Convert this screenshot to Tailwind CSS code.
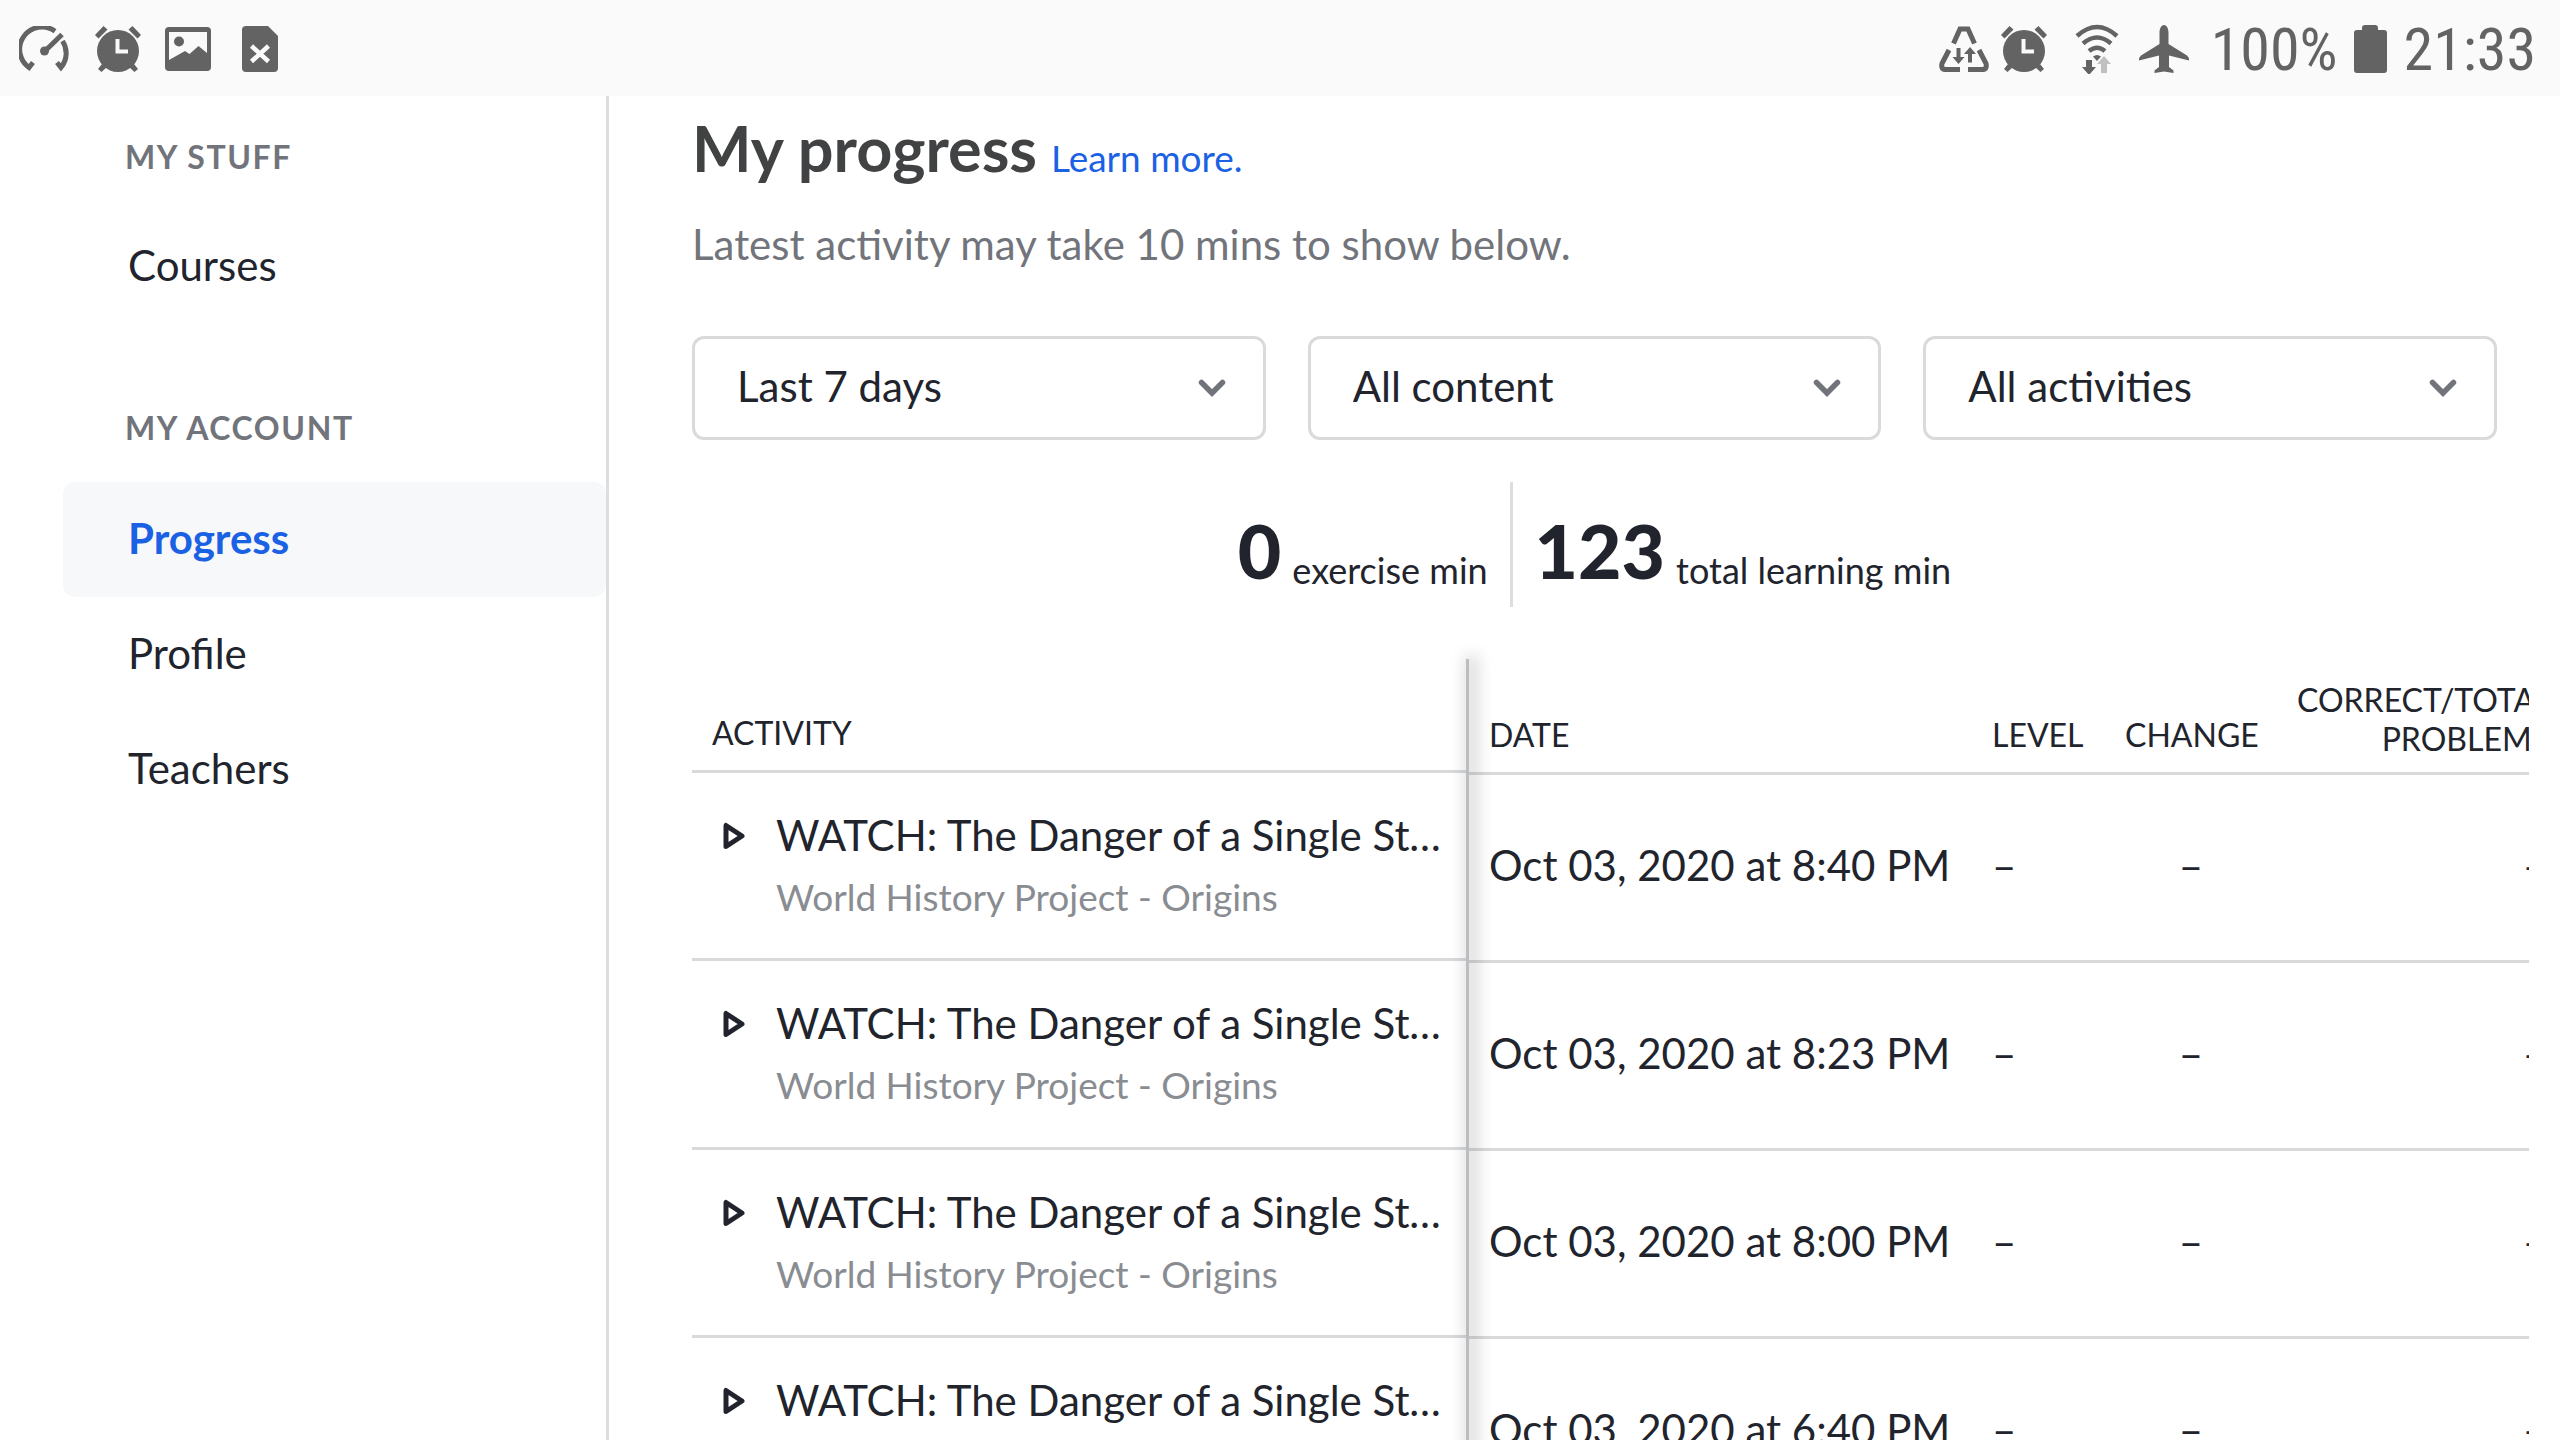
<!DOCTYPE html>
<html lang="en">
<head>
<meta charset="utf-8">
<meta name="viewport" content="width=device-width, initial-scale=1">
<title>My progress</title>
<script src="https://cdn.jsdelivr.net/npm/@tailwindcss/browser@4"></script>
</head>
<body class="flex h-screen flex-col overflow-hidden bg-white font-['Lato',sans-serif] text-[42px] leading-[52px] text-[#21242c]">

<svg class="hidden" aria-hidden="true">
  <symbol id="alarm" viewBox="0 0 46 46">
    <circle cx="23" cy="25" r="21"/>
    <path d="M0 9 8.500 0 12.500 3.500 3.500 12.500zM46 9 37.500 0 33.500 3.500 42.500 12.500zM7 38 3 43 6.500 46 12 41zM39 38 43 43 39.500 46 34 41z"/>
    <path d="M22.500 13v12.500H33" fill="none" stroke="#fafafa" stroke-width="4"/>
  </symbol>
  <symbol id="play" viewBox="0 0 22 28">
    <path d="M3 3.500v21L19 14z" fill="none" stroke="currentColor" stroke-width="5" stroke-linejoin="round"/>
  </symbol>
  <symbol id="chevron" viewBox="0 0 28 18">
    <path d="M3.500 3.500 14 14 24.500 3.500" fill="none" stroke="currentColor" stroke-width="5.500" stroke-linecap="round"/>
  </symbol>
</svg>

<header class="flex h-24 shrink-0 items-center justify-between bg-[#fafafa] pt-0.5 pr-6 pl-[19px] text-[#636363]">
  <div class="flex items-center gap-6">
    <svg class="h-[46px] w-[52px]" viewBox="0 0 52 46" fill="none" stroke="currentColor" stroke-width="5" role="img" aria-label="Speed">
      <path d="M36 5.200A22.300 22.300 0 1 0 10 41.500l4-5M43.500 15A22.300 22.300 0 0 1 42 41.500l-4-5"/>
      <path d="M26 25 43 8.500"/><circle cx="25.500" cy="25" r="4.500" fill="currentColor" stroke="none"/>
    </svg>
    <svg class="size-[46px]" fill="currentColor" role="img" aria-label="Alarm"><use href="#alarm"/></svg>
    <svg class="h-[46px] w-[48px]" viewBox="0 0 48 46" role="img" aria-label="Image">
      <rect x="0" y="1" width="46" height="44" rx="4" fill="currentColor"/>
      <path d="M4 6h38v21l-8.500-7-9 8-4.500-3L4 34z" fill="#fafafa"/>
      <circle cx="14" cy="15.500" r="5" fill="currentColor"/>
    </svg>
    <svg class="ml-1 h-[46px] w-[42px]" viewBox="0 0 42 46" role="img" aria-label="File error">
      <path d="M5 0h22l10 10v32a4 4 0 0 1-4 4H5a4 4 0 0 1-4-4V4a4 4 0 0 1 4-4z" fill="currentColor"/>
      <path d="M10.500 20 27.500 35.500M27.500 20 10.500 35.500" stroke="#fafafa" stroke-width="4.500"/>
    </svg>
  </div>
  <div class="flex items-center text-[60px] leading-[70px] font-['Roboto_Condensed','Liberation_Sans_Narrow',sans-serif]">
    <svg class="mr-3 h-[46px] w-[50px]" viewBox="0 0 50 46" fill="none" stroke="currentColor" stroke-width="5" role="img" aria-label="Data saver">
      <path d="M14.500 17.500 21 3h8l6.500 14.500M10 24 3 37.500Q1.500 43.500 7 43.500H21M40 24l7 13.500Q48.500 43.500 43 43.500H29"/>
      <path d="M19.500 22V34M31 36.500V25" stroke-width="4"/>
      <path d="M13.500 31h12l-6 7zM25 28h12l-6-7z" fill="currentColor" stroke="none"/>
    </svg>
    <svg class="mr-7 size-[46px]" fill="currentColor" role="img" aria-label="Alarm"><use href="#alarm"/></svg>
    <svg class="mr-5 h-[50px] w-[44px]" viewBox="0 0 44 50" role="img" aria-label="Wi-Fi">
      <g fill="none" stroke="currentColor" stroke-width="4.500"><path d="M2 12Q22-6 42 12M8 19.500Q22 7.500 36 19.500M14 27Q22 20.500 30 27"/></g>
      <path d="M18 32.500q4-3 8 0L22 37z" fill="currentColor"/>
      <path d="M11 36v7H7l7 8 7-8h-4v-7z" fill="currentColor"/><path d="M26 49v-9h-4l7-8 7 8h-4v9z" fill="#c0c0c0"/>
    </svg>
    <svg class="mr-[22px] h-[48px] w-[50px]" viewBox="0 0 50 48" fill="currentColor" role="img" aria-label="Airplane mode">
      <path d="M25 0c3 0 4.500 4 4.500 8v11L48 30.500q2 1.500 2 5L30 30.500V42l4.500 3.500V48L25 46.500 15.500 48v-2.500L20 42V30.500L0 35.500q0-3.500 2-5L20.500 19V8C20.500 4 22 0 25 0z"/>
    </svg>
    <span class="pt-0.5">100%</span>
    <svg class="mx-4 h-[48px] w-[34px]" viewBox="0 0 34 48" fill="currentColor" role="img" aria-label="Battery full">
      <path d="M11 0h10q3 0 3 3v2h6q3 0 3 3v37q0 3-3 3H3q-3 0-3-3V8q0-3 3-3h5V3q0-3 3-3z"/>
    </svg>
    <time class="pt-0.5">21:33</time>
  </div>
</header>

<div class="flex min-h-0 flex-1">
  <nav class="w-[609px] shrink-0 border-r-3 border-[#dcdddf] pl-[63px] pt-[41px]" aria-label="Account">
    <h2 class="pl-[62px] text-[32px] leading-10 font-bold tracking-wider text-[#71747a]">MY STUFF</h2>
    <ul class="mt-8">
      <li><a href="#" class="flex h-[115px] items-center rounded-xl pb-[3px] pl-[65px]">Courses</a></li>
    </ul>
    <h2 class="mt-[84px] pl-[62px] text-[32px] leading-10 font-bold tracking-wider text-[#71747a]">MY ACCOUNT</h2>
    <ul class="mt-[34px]">
      <li><a href="#" aria-current="page" class="flex h-[115px] items-center rounded-xl bg-[#f7f8fa] pb-[3px] pl-[65px] font-bold text-[#1b61e4]">Progress</a></li>
      <li><a href="#" class="flex h-[115px] items-center rounded-xl pb-[3px] pl-[65px]">Profile</a></li>
      <li><a href="#" class="flex h-[115px] items-center rounded-xl pb-[3px] pl-[65px]">Teachers</a></li>
    </ul>
  </nav>

  <main class="min-w-0 flex-1 overflow-hidden pt-[14px] pr-[31px] pl-[83px]">
    <div class="flex items-baseline gap-[14px]">
      <h1 class="text-[63px] leading-[76px] font-bold text-[#414243]">My progress</h1>
      <a href="#" class="text-[37px] text-[#1b61e4]">Learn more.</a>
    </div>
    <p class="mt-8 text-[#71747a]">Latest activity may take 10 mins to show below.</p>

    <form class="mt-[66px] mr-8 grid grid-cols-3 gap-[42px]">
      <div class="relative">
        <select aria-label="Time range" class="h-[104px] w-full appearance-none rounded-xl border-3 border-[#d9dadc] bg-white pb-[5px] pl-[42px]"><option>Last 7 days</option></select>
        <svg class="pointer-events-none absolute top-[43px] right-10 h-[18px] w-7 text-[#71747a]" aria-hidden="true"><use href="#chevron"/></svg>
      </div>
      <div class="relative">
        <select aria-label="Content" class="h-[104px] w-full appearance-none rounded-xl border-3 border-[#d9dadc] bg-white pb-[5px] pl-[42px]"><option>All content</option></select>
        <svg class="pointer-events-none absolute top-[43px] right-10 h-[18px] w-7 text-[#71747a]" aria-hidden="true"><use href="#chevron"/></svg>
      </div>
      <div class="relative">
        <select aria-label="Activity type" class="h-[104px] w-full appearance-none rounded-xl border-3 border-[#d9dadc] bg-white pb-[5px] pl-[42px]"><option>All activities</option></select>
        <svg class="pointer-events-none absolute top-[43px] right-10 h-[18px] w-7 text-[#71747a]" aria-hidden="true"><use href="#chevron"/></svg>
      </div>
    </form>

    <div class="mt-[42px] mr-8 flex h-[125px] justify-center text-[36px] leading-[44px]">
      <p class="flex items-end gap-[11px] border-r-3 border-[#dcdddf] pr-[22px] pb-[15px]"><strong class="text-[75px] leading-[84px] font-black">0</strong> exercise min</p>
      <p class="flex items-end gap-[11px] pb-[15px] pl-[22px]"><strong class="text-[75px] leading-[84px] font-black">123</strong> total learning min</p>
    </div>

    <div class="mt-[52px] flex">
      <table class="w-[774px] shrink-0 table-fixed border-collapse text-left">
        <thead>
          <tr class="h-[112px] border-b-3 border-[#d8d9db] text-[32px] leading-[39px]"><th scope="col" class="px-5 pb-[18px] align-bottom font-normal">ACTIVITY</th></tr>
        </thead>
        <tbody id="activities"></tbody>
      </table>
      <div class="relative z-10 w-[3px] shrink-0 bg-[#bcbdc0] shadow-[4px_0_16px_4px_rgba(0,0,0,0.18)]"></div>
      <div class="min-w-0 flex-1 overflow-hidden pt-0.5">
        <table class="w-[1096px] table-fixed border-collapse text-left">
          <colgroup><col class="w-[503px]"><col class="w-[133px]"><col class="w-[172px]"><col></colgroup>
          <thead>
            <tr class="h-[112px] border-b-3 border-[#d8d9db] text-[32px] leading-[39px]">
              <th scope="col" class="pb-[18px] pl-5 align-bottom font-normal">DATE</th>
              <th scope="col" class="pb-[18px] pl-5 align-bottom font-normal">LEVEL</th>
              <th scope="col" class="pb-[18px] pl-5 align-bottom font-normal">CHANGE</th>
              <th scope="col" class="pr-4 pb-[14px] pl-5 text-right align-bottom font-normal">CORRECT/TOTAL PROBLEMS</th>
            </tr>
          </thead>
          <tbody id="details"></tbody>
        </table>
      </div>
    </div>
  </main>
</div>

<script>
  const times = ["8:40", "8:23", "8:00", "6:40"];
  document.getElementById("activities").innerHTML = times.map(() => `
    <tr class="h-[188px] border-b-3 border-[#d8d9db]">
      <td class="pt-9 pr-5 pl-[31px] align-top">
        <div class="flex gap-[31px]">
          <svg class="mt-[13px] h-7 w-[22px] shrink-0" aria-hidden="true"><use href="#play"/></svg>
          <div class="min-w-0">
            <a href="#" class="block truncate">WATCH: The Danger of a Single Story</a>
            <p class="mt-3 text-[37px] leading-[48px] text-[#898c91]">World History Project - Origins</p>
          </div>
        </div>
      </td>
    </tr>`).join("");
  document.getElementById("details").innerHTML = times.map((time) => `
    <tr class="h-[188px] border-b-3 border-[#d8d9db]">
      <td class="pb-1 pl-5 whitespace-nowrap">Oct 03, 2020 at ${time} PM</td>
      <td class="pb-1 pl-5">–</td>
      <td class="px-5 pb-1 text-center">–</td>
      <td class="pr-[18px] pb-1 text-right">–</td>
    </tr>`).join("");
</script>
</body>
</html>
